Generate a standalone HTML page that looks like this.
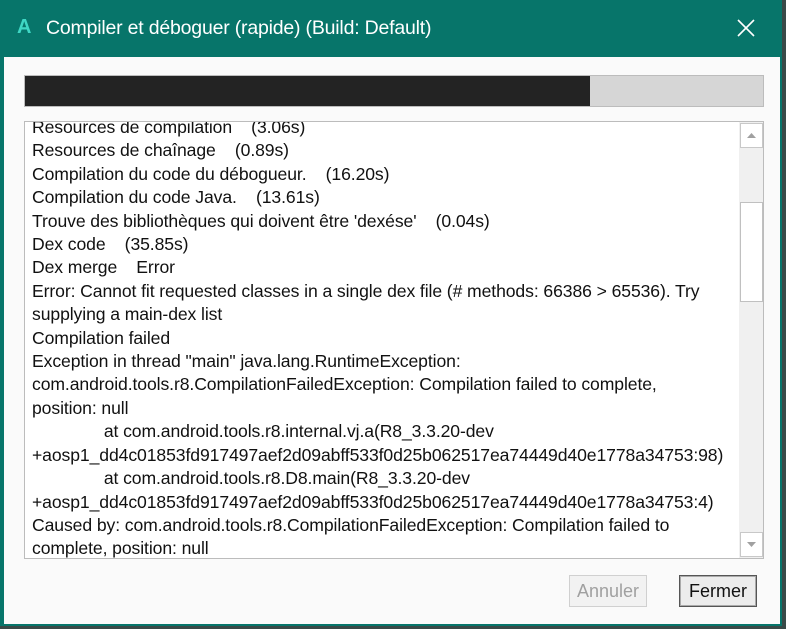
<!DOCTYPE html><html><head><style>
body{margin:0;width:786px;height:629px;background:#3a4a48;position:relative;overflow:hidden;font-family:"Liberation Sans",sans-serif}
.win{position:absolute;left:0;top:0;width:782px;height:626px;background:#07756a;}
.title{position:absolute;left:0;top:0;width:782px;height:57px;color:#fff;}
.body{position:absolute;left:4px;top:57px;width:776px;height:567px;background:#fafafa;}
.pb{position:absolute;left:24px;top:75px;width:738px;height:30px;border:1px solid #bcbcbc;background:#d6d6d6}
.pb i{position:absolute;left:0;top:0;width:565px;height:30px;background:#232323}
.tb{position:absolute;left:24px;top:121px;width:738px;height:436px;border:1px solid #bcbcbc;background:#fff;overflow:hidden}
.txt{position:absolute;left:7px;top:-6px;width:705px;font-size:17.6px;line-height:23.4px;color:#111;white-space:pre;letter-spacing:-0.1px}
.sb{position:absolute;right:0;top:0;width:24px;height:436px;background:#f0f0f0}
.btn{position:absolute;top:575px;height:30px;width:76px;font-size:18px;text-align:center;line-height:30px;background:#ececec}
</style></head><body>
<div class="win">
<div class="title"><span style="position:absolute;left:17px;top:16px;color:#3fd7c4;font-size:20px;font-weight:bold">A</span><span style="position:absolute;left:46px;top:17px;font-size:19.5px;letter-spacing:-0.2px">Compiler et déboguer (rapide) (Build: Default)</span>
<svg style="position:absolute;left:737px;top:19px" width="18" height="18"><path d="M1 1L17 17M17 1L1 17" stroke="#fff" stroke-width="1.6"/></svg></div>
<div class="body"></div>
</div>
<div class="pb"><i></i></div>
<div class="tb"><div class="txt">Resources de compilation    (3.06s)
Resources de chaînage    (0.89s)
Compilation du code du débogueur.    (16.20s)
Compilation du code Java.    (13.61s)
Trouve des bibliothèques qui doivent être 'dexése'    (0.04s)
Dex code    (35.85s)
Dex merge    Error
Error: Cannot fit requested classes in a single dex file (# methods: 66386 &gt; 65536). Try
supplying a main-dex list
Compilation failed
Exception in thread "main" java.lang.RuntimeException:
com.android.tools.r8.CompilationFailedException: Compilation failed to complete,
position: null
               at com.android.tools.r8.internal.vj.a(R8_3.3.20-dev
+aosp1_dd4c01853fd917497aef2d09abff533f0d25b062517ea74449d40e1778a34753:98)
               at com.android.tools.r8.D8.main(R8_3.3.20-dev
+aosp1_dd4c01853fd917497aef2d09abff533f0d25b062517ea74449d40e1778a34753:4)
Caused by: com.android.tools.r8.CompilationFailedException: Compilation failed to
complete, position: null</div>
<div class="sb">
<div style="position:absolute;left:1px;top:1px;width:21px;height:23px;border:1px solid #c8c8c8;background:#fff"><svg width="21" height="23"><path d="M6 14L10.5 9L15 14Z" fill="#a0a0a0"/></svg></div>
<div style="position:absolute;left:1px;top:80px;width:21px;height:98px;border:1px solid #c0c0c0;background:#fff"></div>
<div style="position:absolute;left:1px;top:410px;width:21px;height:23px;border:1px solid #c8c8c8;background:#fff"><svg width="21" height="23"><path d="M6 9L10.5 14L15 9Z" fill="#a0a0a0"/></svg></div>
</div></div>
<div class="btn" style="left:569px;border:1px solid #d0d0d0;color:#a0a0a0;background:#f2f2f2">Annuler</div>
<div class="btn" style="left:679px;border:1px solid #555;color:#111;box-shadow:inset 0 0 0 1px #aaa">Fermer</div>
</body></html>
